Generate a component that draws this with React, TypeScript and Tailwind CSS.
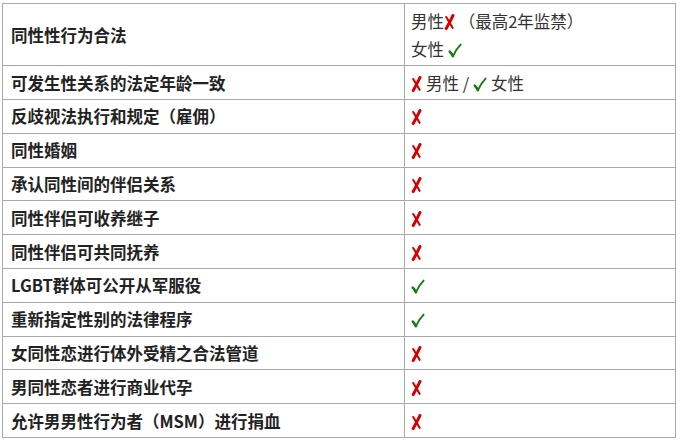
const X = ({ className = "" }: { className?: string }) => (
  <svg width="11" height="16" viewBox="0 0 11 16" className={"inline-block align-[-2px] " + className}>
    <path d="M9 1.5 C7 5.5 4.8 10 2.2 14.5" stroke="#d40000" strokeWidth="3" strokeLinecap="round" fill="none" />
    <path d="M2.2 3 C4.3 6.3 6.3 10 8.6 13.8" stroke="#d40000" strokeWidth="2.1" strokeLinecap="round" fill="none" />
  </svg>
);

const V = ({ className = "" }: { className?: string }) => (
  <svg width="14" height="15" viewBox="0 0 14 15" className={"inline-block align-[-2px] " + className}>
    <path d="M1.8 8.6 C3 9.8 3.9 11.2 4.9 13.2" stroke="#167a16" strokeWidth="2.6" strokeLinecap="round" fill="none" />
    <path d="M4.9 13.2 C6.8 8.8 9.4 4.8 12.6 1.6" stroke="#167a16" strokeWidth="1.9" strokeLinecap="round" fill="none" />
  </svg>
);

type Row = { label: string; value: "no" | "yes" };

const rows: Row[] = [
  { label: "反歧视法执行和规定（雇佣）", value: "no" },
  { label: "同性婚姻", value: "no" },
  { label: "承认同性间的伴侣关系", value: "no" },
  { label: "同性伴侣可收养继子", value: "no" },
  { label: "同性伴侣可共同抚养", value: "no" },
  { label: "LGBT群体可公开从军服役", value: "yes" },
  { label: "重新指定性别的法律程序", value: "yes" },
  { label: "女同性恋进行体外受精之合法管道", value: "no" },
  { label: "男同性恋者进行商业代孕", value: "no" },
  { label: "允许男男性行为者（MSM）进行捐血", value: "no" },
];

const font = { fontFamily: '"Noto Sans CJK SC", "Noto Sans", sans-serif' };

export default function App() {
  const left = "border border-[#a9a9a9] pl-[8px] pr-2 py-0 leading-[20px] text-[16.5px] font-bold text-[#222] text-left align-middle";
  const right = "border border-[#a9a9a9] pl-[6px] pr-2 py-0 leading-[20px] text-[16.5px] text-[#333] text-left align-middle";

  return (
    <div className="bg-white w-[682px] h-[441px] pt-[3px] pl-[2px]" style={font}>
      <table className="border-collapse w-[674px] table-fixed">
        <colgroup>
          <col className="w-[402px]" />
          <col />
        </colgroup>
        <tbody>
          <tr className="h-[62px]">
            <td className={left}>同性性行为合法</td>
            <td className="border border-[#a9a9a9] pl-[6px] pr-2 py-0 leading-[28px] text-[16.5px] text-[#333]">
              <div>男性<X /> （最高2年监禁）</div>
              <div>女性 <V /></div>
            </td>
          </tr>
          <tr className="h-[34px]">
            <td className={left}>可发生性关系的法定年龄一致</td>
            <td className={right}>
              <X className="mr-[4px]" />男性 / <V className="mr-[4px]" />女性
            </td>
          </tr>
          {rows.map((r) => (
            <tr key={r.label} className="h-[33.8px]">
              <td className={left}>{r.label}</td>
              <td className={right}>{r.value === "no" ? <X /> : <V />}</td>
            </tr>
          ))}
        </tbody>
      </table>
    </div>
  );
}
